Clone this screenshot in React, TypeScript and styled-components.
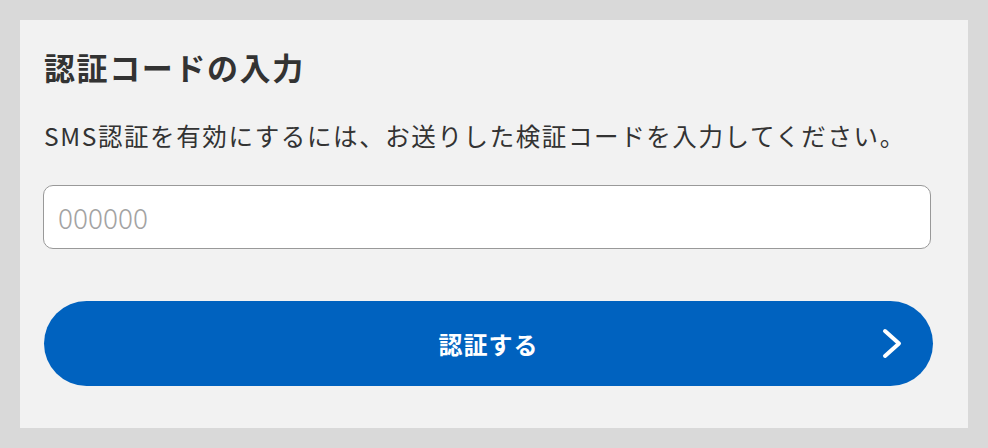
import React from 'react';
import styled, { createGlobalStyle } from 'styled-components';

const GlobalStyle = createGlobalStyle`
  html, body {
    margin: 0;
    padding: 0;
    background: #d9d9d9;
  }
  body {
    font-family: "Noto Sans CJK JP", "Noto Sans", sans-serif;
  }
`;

const Page = styled.div`
  padding: 20px;
  box-sizing: border-box;
  width: 988px;
  height: 448px;
`;

const Card = styled.section`
  background: #f2f2f2;
  padding: 24px 35px 42px 24px;
  display: flex;
  flex-direction: column;
`;

const Title = styled.h2`
  margin: 0;
  font-size: 31px;
  line-height: 46px;
  font-weight: 700;
  color: #333;
  letter-spacing: 1.6px;
`;

const Description = styled.p`
  margin: 28px 0 0;
  font-size: 24.5px;
  line-height: 36px;
  color: #333;
  letter-spacing: 1.6px;
  white-space: nowrap;
`;

const CodeInput = styled.input`
  margin: 31px 2px 0 -1px;
  height: 64px;
  box-sizing: border-box;
  border: 1.5px solid #999;
  border-radius: 10px;
  background: #fff;
  padding: 0 14px;
  font-family: "Noto Sans CJK JP", sans-serif;
  font-size: 28px;
  font-weight: 300;
  color: #333;
  outline: none;

  &::placeholder {
    color: #a3a3a3;
  }
`;

const SubmitButton = styled.button`
  margin-top: 52px;
  height: 85px;
  border: none;
  border-radius: 43px;
  background: #0062bf;
  color: #fff;
  font-family: "Noto Sans CJK JP", sans-serif;
  font-size: 24px;
  font-weight: 700;
  letter-spacing: 1px;
  display: grid;
  grid-template-columns: 1fr auto 1fr;
  align-items: center;
  padding: 0 31px;
  cursor: pointer;
`;

const Label = styled.span`
  grid-column: 2;
`;

const Chevron = styled.svg`
  grid-column: 3;
  justify-self: end;
  width: 20px;
  height: 31px;
`;

export default function App() {
  return (
    <>
      <GlobalStyle />
      <Page>
        <Card>
          <Title>認証コードの入力</Title>
          <Description>SMS認証を有効にするには、お送りした検証コードを入力してください。</Description>
          <CodeInput type="text" inputMode="numeric" placeholder="000000" />
          <SubmitButton type="button">
            <Label>認証する</Label>
            <Chevron viewBox="0 0 20 31" fill="none">
              <path d="M3 3l14 12.5L3 28" stroke="#fff" strokeWidth="4" strokeLinecap="round" strokeLinejoin="round" />
            </Chevron>
          </SubmitButton>
        </Card>
      </Page>
    </>
  );
}
